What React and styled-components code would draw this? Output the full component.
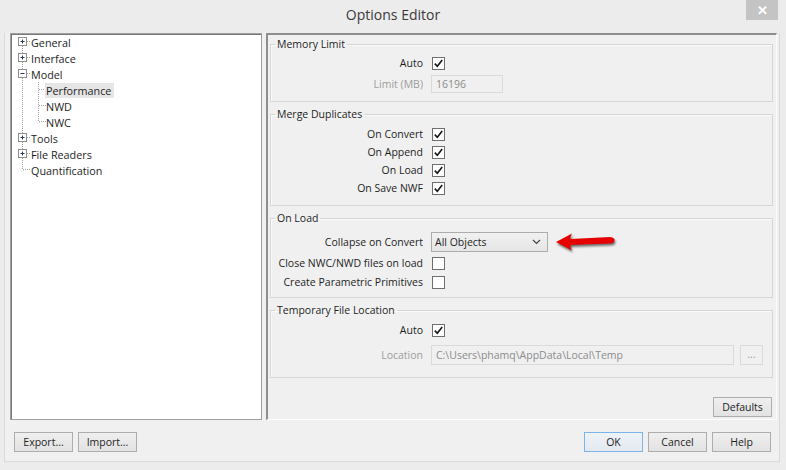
import React from 'react';
import styled, { createGlobalStyle } from 'styled-components';

const GlobalStyle = createGlobalStyle`
  html, body {
    margin: 0;
    padding: 0;
    background: #ececec;
  }
  body {
    font-family: "Open Sans", "Noto Sans", sans-serif;
    font-size: 10.5px;
    color: #1e1e1e;
  }
  * {
    box-sizing: border-box;
  }
`;

const Window = styled.div`
  width: 786px;
  height: 470px;
  background: #ececec;
  display: flex;
  flex-direction: column;
  overflow: hidden;
`;

const TitleBar = styled.div`
  height: 33px;
  display: grid;
  grid-template-columns: 1fr auto 1fr;
  align-items: start;
`;

const Title = styled.div`
  grid-column: 2;
  font-size: 14px;
  line-height: 30px;
  color: #3a3a3a;
`;

const CloseButton = styled.div`
  grid-column: 3;
  justify-self: end;
  margin-right: 8px;
  width: 32px;
  height: 20px;
  background: #c4c4c4;
  color: #fff;
  font-size: 13px;
  font-weight: 700;
  line-height: 20px;
  text-align: center;
`;

const Client = styled.div`
  flex: 1;
  margin: 0 6px 8px 4px;
  padding: 0 2px 0 5px;
  border: 1px solid #dadada;
  border-top: none;
  background: #f0f0f0;
  display: flex;
  flex-direction: column;
`;

const Panels = styled.div`
  height: 387px;
  display: flex;
  gap: 4px;
`;

const TreePanel = styled.div`
  width: 252px;
  flex-shrink: 0;
  background: #fff;
  border: 1px solid #a0a0a0;
  box-shadow: inset 1px 1px 0 #787878;
  padding: 0 0 0 3px;
`;

const TreeRow = styled.div`
  display: flex;
  height: 16px;
  align-items: center;
`;

const Gutter = styled.svg`
  width: 16px;
  height: 16px;
  flex-shrink: 0;
  display: block;
`;

const TreeLabel = styled.span`
  font-size: 10.8px;
  line-height: 15px;
  padding: 0 3px 0 1px;
  margin-left: ${(p) => (p.$child ? '-1px' : '0')};
  background: ${(p) => (p.$selected ? '#e6e6e6' : 'transparent')};
  white-space: nowrap;
`;

const SettingsPanel = styled.div`
  flex: 1;
  display: flex;
  flex-direction: column;
  gap: 4px;
  border-style: solid;
  border-width: 2px 1px 1px 2px;
  border-color: #8e8e8e #fdfdfd #fdfdfd #8e8e8e;
  padding: 1px 3px 0 2px;
`;

const Group = styled.fieldset`
  margin: 0;
  padding: ${(p) => p.$pt}px 0 ${(p) => p.$pb}px 0;
  border: 1px solid #d6d6d6;
  box-shadow: inset 1px 1px 0 #fafafa;
  display: flex;
  flex-direction: column;
  gap: ${(p) => p.$gap || 0}px;
  min-width: 0;
`;

const Legend = styled.legend`
  margin-left: 4px;
  padding: 0 2px;
  line-height: 16px;
  color: #1e1e1e;
`;

const Row = styled.div`
  display: flex;
  align-items: center;
  gap: 8px;
  height: ${(p) => p.$h || 18}px;
`;

const FieldLabel = styled.span`
  width: 152px;
  flex-shrink: 0;
  text-align: right;
  white-space: nowrap;
  color: ${(p) => (p.$disabled ? '#9c9c9c' : '#1e1e1e')};
`;

const CheckBox = styled.span`
  width: 13px;
  height: 13px;
  margin-left: 1px;
  border: 1px solid #6f6f6f;
  background: #fff;
  display: flex;
  align-items: center;
  justify-content: center;
`;

const TextInput = styled.div`
  width: ${(p) => p.$w}px;
  height: ${(p) => p.$h || 18}px;
  border: 1px solid #dadada;
  background: #f0f0f0;
  color: #8c8c8c;
  padding: 0 4px;
  line-height: ${(p) => (p.$h || 18) - 2}px;
  white-space: nowrap;
`;

const Select = styled.div`
  width: 117px;
  height: 20px;
  border: 1px solid #acacac;
  background: linear-gradient(#f1f1f1, #e6e6e6);
  display: flex;
  align-items: center;
  justify-content: space-between;
  padding: 0 6px 0 3px;
`;

const BrowseButton = styled.div`
  width: 23px;
  height: 20px;
  margin-left: -2px;
  border: 1px solid #dadada;
  background: #f0f0f0;
  color: #a0a0a0;
  text-align: center;
  line-height: 16px;
`;

const PanelFooter = styled.div`
  margin-top: auto;
  display: flex;
  justify-content: flex-end;
  padding: 0 1px 2px 0;
`;

const Button = styled.div`
  width: 59px;
  height: 20px;
  border: 1px solid ${(p) => (p.$primary ? '#7db4e8' : '#adadad')};
  background: ${(p) =>
    p.$primary ? 'linear-gradient(#eef3f8, #e3e9ef)' : 'linear-gradient(#efefef, #e2e2e2)'};
  color: #1e1e1e;
  text-align: center;
  line-height: 18px;
`;

const ButtonBar = styled.div`
  display: flex;
  justify-content: space-between;
  padding: 12px 6px 0 4px;
`;

const ButtonGroup = styled.div`
  display: flex;
  gap: 5px;
`;

const Arrow = styled.svg`
  margin-left: 0;
  filter: drop-shadow(1px 2px 1px rgba(0, 0, 0, 0.55));
`;

const LINE = '#a3a3a3';

function Expander({ sign }) {
  return (
    <g>
      <rect x="4.5" y="3.5" width="8" height="8" fill="#fff" stroke="#8f8f8f" />
      <line x1="6.5" y1="7.5" x2="10.5" y2="7.5" stroke="#2b3b55" />
      {sign === '+' && <line x1="8.5" y1="5.5" x2="8.5" y2="9.5" stroke="#2b3b55" />}
    </g>
  );
}

function Dotted(props) {
  return <line {...props} stroke={LINE} strokeDasharray="1 1" shapeRendering="crispEdges" />;
}

// one 16px column of the tree's connector lines
function TreeCell({ kind, first, last, sign }) {
  return (
    <Gutter viewBox="0 0 16 16">
      {kind === 'pass' && <Dotted x1="8.5" y1="0" x2="8.5" y2="16" />}
      {kind !== 'pass' && (
        <>
          {!first && <Dotted x1="8.5" y1="0" x2="8.5" y2="8" />}
          {!last && <Dotted x1="8.5" y1="8" x2="8.5" y2="16" />}
          <Dotted x1="9" y1="7.5" x2="16" y2="7.5" />
          {sign && <Expander sign={sign} />}
        </>
      )}
    </Gutter>
  );
}

const tree = [
  { label: 'General', sign: '+', first: true },
  { label: 'Interface', sign: '+' },
  { label: 'Model', sign: '-' },
  { label: 'Performance', child: true, selected: true },
  { label: 'NWD', child: true },
  { label: 'NWC', child: true, last: true },
  { label: 'Tools', sign: '+' },
  { label: 'File Readers', sign: '+' },
  { label: 'Quantification', last: true },
];

function Check({ checked }) {
  return (
    <CheckBox>
      {checked && (
        <svg width="11" height="11" viewBox="0 0 11 11">
          <path d="M1.8 5.6 L4.3 8.2 L9.2 2" fill="none" stroke="#151515" strokeWidth="1.6" />
        </svg>
      )}
    </CheckBox>
  );
}

function CheckRow({ label, checked }) {
  return (
    <Row>
      <FieldLabel>{label}</FieldLabel>
      <Check checked={checked} />
    </Row>
  );
}

export default function App() {
  return (
    <>
      <GlobalStyle />
      <Window>
        <TitleBar>
          <Title>Options Editor</Title>
          <CloseButton>✕</CloseButton>
        </TitleBar>
        <Client>
          <Panels>
            <TreePanel>
              {tree.map((item) => (
                <TreeRow key={item.label}>
                  {item.child ? (
                    <>
                      <TreeCell kind="pass" />
                      <TreeCell kind="child" last={item.last} />
                    </>
                  ) : (
                    <TreeCell kind="node" first={item.first} last={item.last} sign={item.sign} />
                  )}
                  <TreeLabel $child={item.child} $selected={item.selected}>
                    {item.label}
                  </TreeLabel>
                </TreeRow>
              ))}
            </TreePanel>

            <SettingsPanel>
              <Group $pt={2} $pb={8} $gap={2}>
                <Legend>Memory Limit</Legend>
                <CheckRow label="Auto" checked />
                <Row $h={19}>
                  <FieldLabel $disabled>Limit (MB)</FieldLabel>
                  <TextInput $w={72}>16196</TextInput>
                </Row>
              </Group>

              <Group $pt={3} $pb={8}>
                <Legend>Merge Duplicates</Legend>
                <CheckRow label="On Convert" checked />
                <CheckRow label="On Append" checked />
                <CheckRow label="On Load" checked />
                <CheckRow label="On Save NWF" checked />
              </Group>

              <Group $pt={5} $pb={6} $gap={1}>
                <Legend>On Load</Legend>
                <Row $h={22}>
                  <FieldLabel>Collapse on Convert</FieldLabel>
                  <Select>
                    <span>All Objects</span>
                    <svg width="9" height="6" viewBox="0 0 9 6">
                      <path d="M1 1 L4.5 4.5 L8 1" fill="none" stroke="#444" strokeWidth="1.2" />
                    </svg>
                  </Select>
                  <Arrow width="60" height="19" viewBox="0 0 60 19">
                    <path
                      d="M0 9 L16 0.5 Q14 4 14.5 6 L54 4 Q59 4.5 58.5 7.5 Q58 10.5 54 10.5 L14.5 12 Q14 14.5 16 17.5 Z"
                      fill="#e60000"
                    />
                  </Arrow>
                </Row>
                <CheckRow label="Close NWC/NWD files on load" />
                <CheckRow label="Create Parametric Primitives" />
              </Group>

              <Group $pt={3} $pb={11} $gap={5}>
                <Legend>Temporary File Location</Legend>
                <CheckRow label="Auto" checked />
                <Row $h={22}>
                  <FieldLabel $disabled>Location</FieldLabel>
                  <TextInput $w={303} $h={20}>C:\Users\phamq\AppData\Local\Temp</TextInput>
                  <BrowseButton>...</BrowseButton>
                </Row>
              </Group>

              <PanelFooter>
                <Button>Defaults</Button>
              </PanelFooter>
            </SettingsPanel>
          </Panels>

          <ButtonBar>
            <ButtonGroup>
              <Button>Export...</Button>
              <Button>Import...</Button>
            </ButtonGroup>
            <ButtonGroup>
              <Button $primary>OK</Button>
              <Button>Cancel</Button>
              <Button>Help</Button>
            </ButtonGroup>
          </ButtonBar>
        </Client>
      </Window>
    </>
  );
}
